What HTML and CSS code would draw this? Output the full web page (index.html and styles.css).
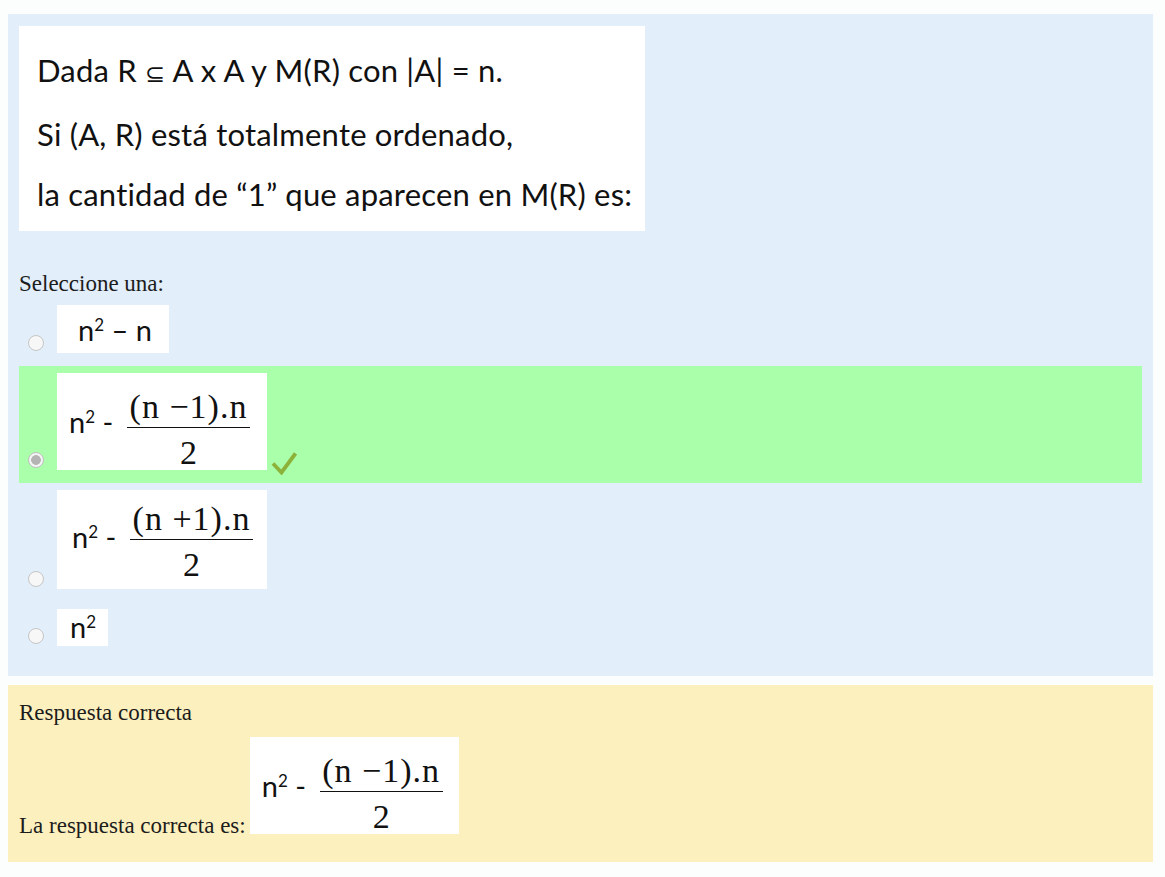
FILE: index.html
```html
<!DOCTYPE html>
<html lang="es">
<head>
<meta charset="utf-8">
<title>Pregunta</title>
<link rel="stylesheet" href="styles.css">
</head>
<body>
<div class="formulation">
  <div class="qimg">
    <p>Dada R <span class="subset">⊆</span> A x A y M(R) con |A| = n.</p>
    <p>Si (A, R) está totalmente ordenado,</p>
    <p>la cantidad de “1” que aparecen en M(R) es:</p>
  </div>
  <div class="prompt">Seleccione una:</div>
  <div class="answers">
    <div class="opt">
      <span class="radio"></span>
      <div class="eq eq-simple">n<span class="sup">2</span> – n</div>
    </div>
    <div class="opt correct">
      <span class="radio checked"></span>
      <div class="eq eq-frac">
        <span class="lead">n<span class="sup">2</span> -</span>
        <span class="frac"><span class="num">(n −1).n</span><span class="den">2</span></span>
      </div>
      <svg class="tick" width="26" height="24" viewBox="0 0 26 24"><path d="M2 12.5 L10.5 21.5 L24.5 2.5" fill="none" stroke="#8db23a" stroke-width="3.8" stroke-linejoin="miter" stroke-linecap="butt"/></svg>
    </div>
    <div class="opt">
      <span class="radio"></span>
      <div class="eq eq-frac alt">
        <span class="lead">n<span class="sup">2</span> -</span>
        <span class="frac"><span class="num">(n +1).n</span><span class="den">2</span></span>
      </div>
    </div>
    <div class="opt">
      <span class="radio"></span>
      <div class="eq eq-small">n<span class="sup">2</span></div>
    </div>
  </div>
</div>
<div class="outcome">
  <div class="feedback">Respuesta correcta</div>
  <div class="rightanswer">
    <span class="ra-text">La respuesta correcta es:</span>
    <div class="eq eq-frac ans">
      <span class="lead">n<span class="sup">2</span> -</span>
      <span class="frac"><span class="num">(n −1).n</span><span class="den">2</span></span>
    </div>
  </div>
</div>
</body>
</html>
```
FILE: styles.css
```css
body {
  margin: 0;
  padding: 14px 12px 15px 8px;
  background: #fcfdfd;
  font-family: "Liberation Serif", serif;
  font-size: 23px;
  color: #1c1c1c;
}

.formulation {
  background: #e2eef9;
  padding: 12px 11px 17px 11px;
}

.qimg {
  width: 626px;
  height: 205px;
  box-sizing: border-box;
  background: #fff;
  padding: 14px 0 0 18px;
  font-family: Lato, "DejaVu Sans", sans-serif;
  font-size: 31px;
  letter-spacing: 0.2px;
  color: #111;
}

.qimg p {
  margin: 0;
  line-height: 60px;
  white-space: nowrap;
}

.subset {
  font-family: "DejaVu Sans", sans-serif;
  font-size: 24px;
}

.prompt {
  padding: 41px 0 2px;
  line-height: 24px;
}

.opt {
  display: flex;
  align-items: flex-end;
  padding: 7px 0 13px 9px;
}

.opt.correct {
  background: #aaffaa;
}

.radio {
  flex: none;
  width: 16px;
  height: 16px;
  box-sizing: border-box;
  border: 1px solid #c6c6c6;
  border-radius: 50%;
  background: #f7f7f7;
  margin: 0 13px 2px 0;
}

.radio.checked {
  background: radial-gradient(circle, #b4b4b4 0 4.5px, #f4f4f4 5.2px);
  border-color: #c0c0c0;
}

.eq {
  flex: none;
  background: #fff;
  font-family: Lato, "DejaVu Sans", sans-serif;
  color: #111;
  box-sizing: border-box;
  white-space: nowrap;
}

.sup {
  font-size: 17px;
  line-height: 1;
  vertical-align: 10px;
}

.eq-simple {
  width: 112px;
  height: 48px;
  padding: 2px 0 0 21px;
  font-size: 29px;
  line-height: 46px;
}

.eq-small {
  width: 51px;
  height: 37px;
  padding: 1px 0 0 13px;
  font-size: 29px;
  line-height: 34px;
}

.eq-frac {
  width: 210px;
  height: 97px;
  padding: 17px 0 0 12px;
  display: flex;
  align-items: flex-start;
}

.eq-frac.alt {
  height: 99px;
  padding: 12px 0 0 15px;
}

.eq-frac.ans {
  width: 209px;
}

.lead {
  flex: none;
  width: 58px;
  font-size: 29px;
  line-height: 30px;
  margin-top: 17px;
}

.eq-frac.alt .lead {
  margin-top: 20px;
}

.frac {
  flex: none;
  width: 123px;
  display: flex;
  flex-direction: column;
  font-family: "Liberation Serif", serif;
  font-size: 34px;
  text-align: center;
  color: #111;
}

.num {
  line-height: 34px;
  padding-bottom: 3px;
  border-bottom: 1.5px solid #111;
  letter-spacing: 1px;
}

.den {
  line-height: 34px;
  margin-top: 8px;
}

.tick {
  flex: none;
  margin: 0 0 -5px 4px;
}

.outcome {
  margin-top: 9px;
  background: #fdf0bf;
  padding: 16px 11px 28px;
}

.feedback {
  line-height: 24px;
}

.rightanswer {
  display: flex;
  align-items: flex-end;
  margin-top: 12px;
}

.ra-text {
  line-height: 24px;
  margin: 0 4px -4px 0;
}
```
